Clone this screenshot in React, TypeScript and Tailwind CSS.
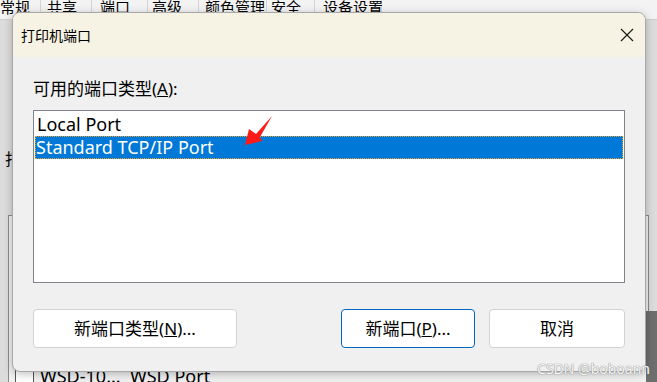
import React from "react";

const tabs = [
  { label: "常规", w: "w-[44px]", pl: "pl-[3px]" },
  { label: "共享", w: "w-[51px]", pl: "pl-[6px]" },
  { label: "端口", w: "w-[56px]", pl: "pl-[8px]" },
  { label: "高级", w: "w-[51px]", pl: "pl-[4px]" },
  { label: "颜色管理", w: "w-[68px]", pl: "pl-[6px]" },
  { label: "安全", w: "w-[48px]", pl: "pl-[4px]" },
  { label: "设备设置", w: "w-[67px]", pl: "pl-[8px]" },
];

const font = "font-['Noto_Sans','Noto_Sans_CJK_SC',sans-serif]";

const Arrow = () => (
  <svg width="36" height="36" viewBox="0 0 36 36" className="absolute left-[227px] top-[55px]">
    <polygon points="5,33 9,17 16,22 32,4 20,25 22,29" fill="#ff1a1a" />
  </svg>
);

const Btn = ({ children, primary }: { children: React.ReactNode; primary?: boolean }) => (
  <button
    className={`h-[39px] rounded-[4px] bg-white text-[17px] text-black whitespace-nowrap ${
      primary ? "border border-[#0067c0] w-[136px]" : "border border-[#d2d2d2]"
    }`}
  >
    {children}
  </button>
);

export default function App() {
  return (
    <div className={`relative w-[657px] h-[382px] overflow-hidden bg-[#dcdcdc] ${font}`}>
      {/* background properties window */}
      <div className="flex h-[20px] bg-[#f3f3f3] border-b border-[#d0d0d0] ml-[-3px]">
        {tabs.map((t) => (
          <div
            key={t.label}
            className={`${t.w} ${t.pl} shrink-0 whitespace-nowrap border-r border-[#d4d4d4] text-[15px] leading-[20px] -mt-[3px] text-black`}
          >
            {t.label}
          </div>
        ))}
      </div>
      <div className="h-[195px] pl-[5px] pt-[128px] text-[16px] leading-[22px] text-black">打印机</div>
      <div className="mx-[8px] h-[200px] border border-[#8a8a8a] bg-[#f0f0f0] flex items-start gap-[6px] pl-[6px] pt-[148px]">
        <div className="w-[19px] h-[20px] mt-[2px] rounded-[4px] border border-[#555] bg-white" />
        <span className="text-[18px] leading-[24px] text-black">WSD-10...&nbsp;&nbsp;WSD Port</span>
      </div>
      <div className="absolute right-0 top-[311px] w-[11px] h-[71px] bg-[#6e6e6e]" />

      {/* dialog */}
      <div className="absolute left-[12px] top-[12px] w-[634px] h-[360px] rounded-[8px] border border-[#a8a8a8] bg-[#f0f0f0] shadow-[0_2px_8px_rgba(0,0,0,0.25)] overflow-hidden flex flex-col">
        <div className="h-[44px] bg-[#f7f3e4] flex items-center justify-between pl-[8px] pr-[10px]">
          <span className="text-[14px] text-black">打印机端口</span>
          <svg width="16" height="16" viewBox="0 0 16 16">
            <path d="M2 2 L14 14 M14 2 L2 14" stroke="#1a1a1a" strokeWidth="1.2" />
          </svg>
        </div>
        <div className="flex-1 px-[20px] pt-[20px] relative">
          <div className="text-[17px] leading-[23px] text-black">
            可用的端口类型(<span className="underline">A</span>):
          </div>
          <div className="mt-[10px] h-[173px] border border-[#82828a] bg-white py-[2px] px-[1px] text-[18px] leading-[23px]">
            <div className="pl-[2px] text-black">Local Port</div>
            <div className="pl-[1px] bg-[#0078d7] text-white outline-1 outline-dotted outline-[#e8a030] -outline-offset-1">
              Standard TCP/IP Port
            </div>
          </div>
          <Arrow />
          <div className="flex mt-[26px] gap-[14px]">
            <div className="w-[204px] mr-[90px] flex">
              <Btn>
                <span className="block w-[202px]">
                  新端口类型(<span className="underline">N</span>)...
                </span>
              </Btn>
            </div>
            <Btn primary>
              新端口(<span className="underline">P</span>)...
            </Btn>
            <Btn primary={false}>
              <span className="block w-[134px]">取消</span>
            </Btn>
          </div>
        </div>
      </div>

      <div className="absolute right-[7px] bottom-[5px] text-[14px] leading-[16px] text-[#f6f6f6] [text-shadow:0_0_1px_#8a8a8a,0_0_1px_#8a8a8a]">
        CSDN @boboann
      </div>
    </div>
  );
}
